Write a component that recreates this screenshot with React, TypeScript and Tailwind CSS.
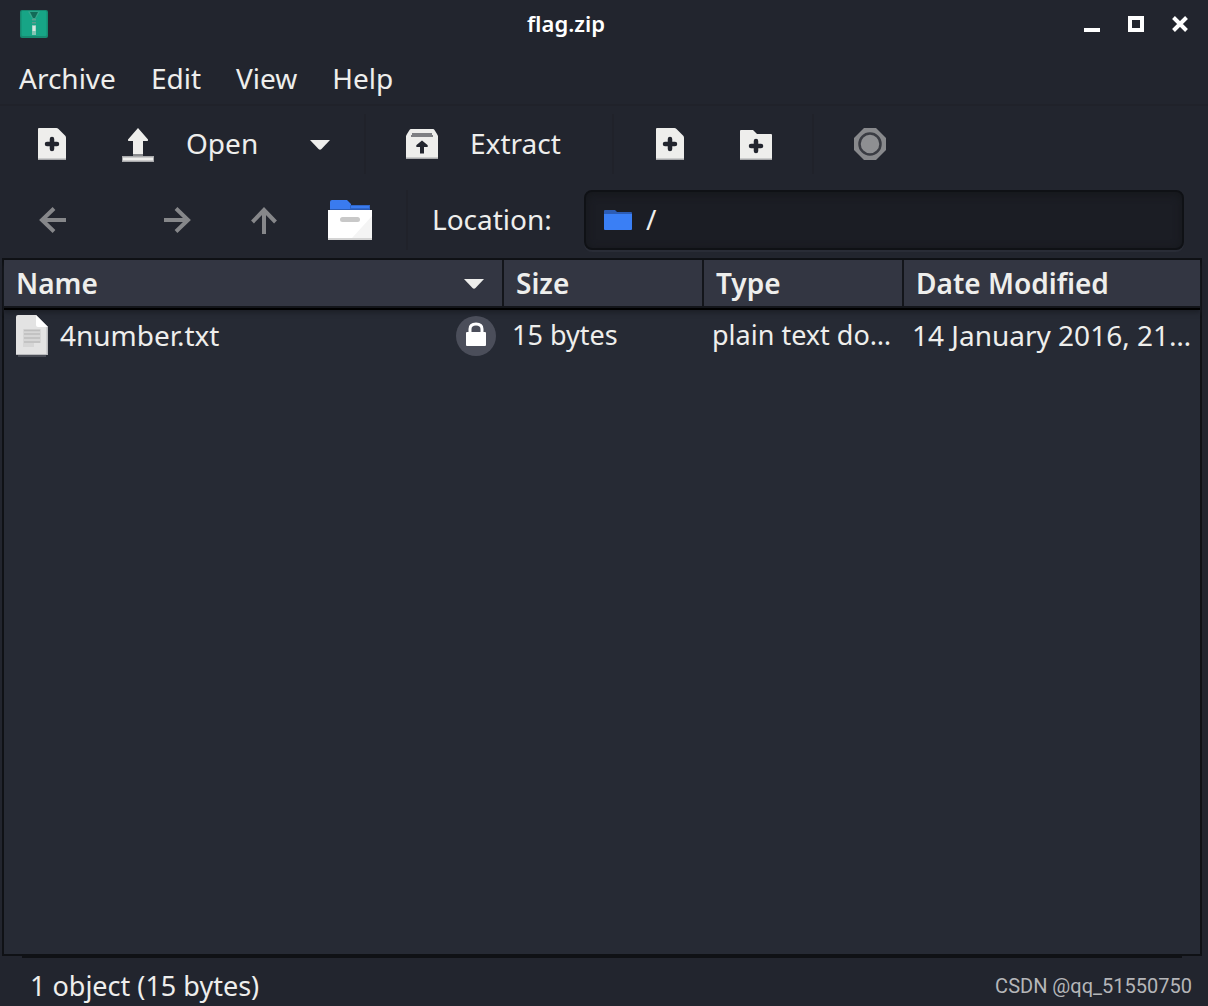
import React from "react";

const ArchiveLogo = () => (
  <svg width="28" height="28" viewBox="0 0 28 28" aria-hidden="true">
    <rect width="28" height="28" rx="2" fill="#168a70" />
    <rect x="1.5" y="1" width="25" height="25" rx="1" fill="#17a586" />
    <path d="M8 1.5h12L15.5 9h-3z" fill="#3aa68e" />
    <path d="M10 2h8l-3 6h-2z" fill="#126b58" />
    <path d="M12 9h4v1.500h-4zM12 12h4v1.500h-4z" fill="#5c9c8e" />
    <rect x="12" y="15" width="4" height="10" fill="#82c6b5" />
    <rect x="12.500" y="16" width="3" height="5" fill="#d6e6e0" />
  </svg>
);

const FilePlus = () => (
  <svg width="32" height="32" viewBox="0 0 32 32" aria-hidden="true">
    <path d="M2 1q0-1 1-1h17.500q1 0 2 1L29 7.500q1 1 1 2V31q0 1-1 1H3q-1 0-1-1z" fill="#eeeeec" />
    <path d="M2 30.500h28V31q0 1-1 1H3q-1 0-1-1z" fill="#a8a9ab" />
    <path d="M16 11v10M11 16h10" stroke="#22252e" strokeWidth="4.500" strokeLinecap="round" />
  </svg>
);

const FolderPlus = () => (
  <svg width="32" height="32" viewBox="0 0 32 32" aria-hidden="true">
    <path d="M0 3q0-1 1-1h12l4 4h14q1 0 1 1v24q0 1-1 1H1q-1 0-1-1z" fill="#eeeeec" />
    <path d="M0 30.500h32V31q0 1-1 1H1q-1 0-1-1z" fill="#a8a9ab" />
    <path d="M16 13v10M11 18h10" stroke="#22252e" strokeWidth="4.500" strokeLinecap="round" />
  </svg>
);

const OpenArrow = () => (
  <svg className="shrink-0" width="32" height="36" viewBox="0 0 32 36" aria-hidden="true">
    <path d="M16 2 26 13.500q.5 1.500-1 1.500h-4v13H11V15H7q-1.500 0-1-1.500z" fill="#eeeeec" />
    <path d="M11 28h10v2H11z" fill="#88898c" />
    <rect y="30" width="32" height="6" fill="#a8a9ab" />
    <rect x="1" y="31.500" width="30" height="3" fill="#eeeeec" />
  </svg>
);

const ExtractBox = () => (
  <svg className="shrink-0" width="32" height="30" viewBox="0 0 32 30" aria-hidden="true">
    <path d="M5 0h22q1 0 1.500 1L31 5l1 2v22q0 1-1 1H1q-1 0-1-1V7l1-2 2.500-4Q4 0 5 0z" fill="#eeeeec" />
    <path d="M0 28.500h32V29q0 1-1 1H1q-1 0-1-1z" fill="#a8a9ab" />
    <path d="M6 4h20v2h1v2H5V6h1z" fill="#7e7f83" />
    <path d="M16 11.500 21.500 16q1 2-1 2H18v6.500h-4V18h-2.500q-2 0-1-2z" fill="#22252e" />
  </svg>
);

const StopIcon = () => (
  <svg width="32" height="32" viewBox="0 0 32 32" aria-hidden="true">
    <path d="M10 0h12l10 10v12L22 32H10L0 22V10z" fill="#88898c" />
    <circle cx="16" cy="16" r="10.500" fill="#8e8f92" stroke="#3a3c43" strokeWidth="2.500" />
  </svg>
);

const Caret = () => (
  <svg width="20" height="12" viewBox="0 0 20 12" aria-hidden="true">
    <path d="M0 2h20L11.500 11q-1.500 1.500-3 0z" fill="#eeeeec" />
  </svg>
);

const Arrow = ({ d }: { d: string }) => (
  <svg width="28" height="28" viewBox="0 0 28 28" fill="none" stroke="#86878a" strokeWidth="4" aria-hidden="true">
    <path d={d} />
  </svg>
);

const HomeFolder = () => (
  <svg width="44" height="40" viewBox="0 0 44 40" aria-hidden="true">
    <path d="M2 2q0-2 2-2h15l4 4v6H2z" fill="#3a7bef" />
    <path d="M22 5h20v5H22z" fill="#2f66c8" />
    <path d="M23 6h18v2H23z" fill="#3a7bef" />
    <path d="M2 9h40v1H2z" fill="#2c5cb4" />
    <path d="M0 10h44v28q0 1-1 1H1q-1 0-1-1z" fill="#fff" />
    <path d="M44 16v22H24z" fill="#f4f4f4" />
    <path d="M0 38h44v2H0z" fill="#d4d4d4" />
    <rect x="12" y="17" width="20" height="5" rx="2.500" fill="#c8c8c8" />
  </svg>
);

const SmallFolder = () => (
  <svg width="28" height="20" viewBox="0 0 28 20" aria-hidden="true">
    <path d="M0 1q0-1 1-1h10l2 2h14q1 0 1 1v4H0z" fill="#2c5cb4" />
    <path d="M0 4h28v15q0 1-1 1H1q-1 0-1-1z" fill="#3a7ff5" />
  </svg>
);

const TextFile = () => (
  <svg className="shrink-0" width="32" height="42" viewBox="0 0 32 42" aria-hidden="true">
    <path d="M2 40h28v2H2z" fill="#4a4d56" />
    <path d="M0 2q0-2 2-2h18l12 12v28H0z" fill="#e3e3e3" />
    <path d="M20 0 32 12H22q-2 0-2-2z" fill="#fff" />
    <path d="M30.500 12H32v28h-1.500zM0 39h32v1H0z" fill="#b9babd" />
    <path d="M7 14h18v14h-7v4H7z" fill="#d6d6d6" />
    <path d="M8 15.500h16M8 19h16M8 23h16M8 27h16" stroke="#bdbdbd" strokeWidth="1.500" />
  </svg>
);

const LockBadge = () => (
  <svg className="shrink-0" width="40" height="40" viewBox="0 0 40 40" role="img" aria-label="Encrypted">
    <circle cx="20" cy="20" r="20" fill="#4b4e5a" />
    <path d="M14 18v-5q0-5 6-5t6 5v5" fill="none" stroke="#fff" strokeWidth="3" />
    <rect x="10" y="16" width="20" height="14" rx="1" fill="#fff" />
  </svg>
);

const Separator = () => <div className="h-[60px] w-0.5 shrink-0 bg-[#20222a]" />;

const iconButton = "flex shrink-0 items-center justify-center";
const headButton = "flex h-[46px] w-full items-center justify-between whitespace-nowrap pl-3 pr-[18px] font-semibold";

export default function App() {
  return (
    <div className="flex min-h-screen flex-col overflow-hidden bg-[#22252e] font-['Noto_Sans',sans-serif] text-[28px] leading-9 text-[#eeeeec]">
      <header className="flex h-12 items-center pl-5 pr-5">
        <ArchiveLogo />
        <h1 className="flex-1 pb-0.5 text-center text-[22px] font-semibold leading-7 text-white">flag.zip</h1>
        <div className="flex items-center gap-7">
          <button aria-label="Minimize" className="flex h-4 w-4 items-end">
            <span className="h-1 w-4 bg-white" />
          </button>
          <button aria-label="Maximize" className="h-4 w-4 border-4 border-white" />
          <button aria-label="Close" className="h-4 w-4">
            <svg width="16" height="16" viewBox="0 0 16 16" aria-hidden="true">
              <path d="m1.500 1.500 13 13m0-13-13 13" stroke="#fff" strokeWidth="4" />
            </svg>
          </button>
        </div>
      </header>

      <nav className="flex h-[58px] items-center gap-[35px] border-b-2 border-[#20222a] pl-[19px] pt-1">
        <button>Archive</button>
        <button>Edit</button>
        <button>View</button>
        <button>Help</button>
      </nav>

      <div className="flex h-[76px] items-center pl-9">
        <button aria-label="New archive" className={iconButton}><FilePlus /></button>
        <button className="ml-[54px] flex w-36 items-center gap-8"><OpenArrow /><span className="pb-0.5">Open</span></button>
        <button aria-label="Recent archives" className="ml-11 flex"><Caret /></button>
        <div className="ml-[34px]"><Separator /></div>
        <button className="ml-10 flex w-40 items-center gap-8"><ExtractBox /><span className="pb-0.5">Extract</span></button>
        <div className="ml-[46px]"><Separator /></div>
        <button aria-label="Add files" className={`ml-10 ${iconButton}`}><FilePlus /></button>
        <button aria-label="Add a folder" className={`ml-[54px] ${iconButton}`}><FolderPlus /></button>
        <div className="ml-10"><Separator /></div>
        <button aria-label="Stop" className={`ml-10 ${iconButton}`}><StopIcon /></button>
      </div>

      <div className="flex h-[76px] items-center pl-[38px] pr-6">
        <button aria-label="Back" className={iconButton}><Arrow d="M28 14H4M16 2.500 4 14l12 11.500" /></button>
        <button aria-label="Forward" className={`ml-[98px] ${iconButton}`}><Arrow d="M0 14h24M12 2.500 24 14 12 25.500" /></button>
        <button aria-label="Up" className={`ml-[58px] ${iconButton}`}><Arrow d="M14 28V4M2.500 16 14 4l11.500 12" /></button>
        <button aria-label="Home" className={`ml-[50px] ${iconButton}`}><HomeFolder /></button>
        <div className="ml-[34px] mr-6"><Separator /></div>
        <label htmlFor="location" className="w-[152px] shrink-0 pb-0.5">Location:</label>
        <div className="relative flex flex-1 items-center">
          <span className="pointer-events-none absolute left-5"><SmallFolder /></span>
          <input
            id="location"
            defaultValue="/"
            className="h-[60px] w-full rounded-lg border-2 border-[#0f1115] bg-[#1b1d24] pb-0.5 pl-15 pr-4 shadow-[0_2px_0_#292c36,inset_0_2px_8px_#15171b] outline-none"
          />
        </div>
      </div>

      <main className="ml-0.5 mr-1.5 flex-1 border-2 border-[#0f1115] bg-[#262a34]">
        <table className="w-full table-fixed border-separate border-spacing-0 text-left">
          <colgroup>
            <col className="w-[500px]" />
            <col className="w-[200px]" />
            <col className="w-[200px]" />
            <col />
          </colgroup>
          <thead>
            <tr className="bg-[#333642] shadow-[0_2px_0_#000,0_5px_4px_#1d2028]">
              <th className="border-b-2 border-r-2 border-[#13151a] p-0"><button className={headButton}>Name<Caret /></button></th>
              <th className="border-b-2 border-r-2 border-[#13151a] p-0"><button className={headButton}>Size</button></th>
              <th className="border-b-2 border-r-2 border-[#13151a] p-0"><button className={headButton}>Type</button></th>
              <th className="border-b-2 border-[#13151a] p-0"><button className={headButton}>Date Modified</button></th>
            </tr>
          </thead>
          <tbody>
            <tr className="h-14">
              <td className="p-0">
                <div className="flex items-center pl-3 pr-2">
                  <TextFile />
                  <span className="ml-3 flex-1 pb-0.5">4number.txt</span>
                  <LockBadge />
                </div>
              </td>
              <td className="whitespace-nowrap p-0 pb-0.5 pl-2 text-[27px]">15 bytes</td>
              <td className="whitespace-nowrap p-0 pb-0.5 pl-2 text-[27px]">plain text do…</td>
              <td className="whitespace-nowrap p-0 pb-0.5 pl-2 text-[28px]">14 January 2016, 21…</td>
            </tr>
          </tbody>
        </table>
      </main>

      <footer className="ml-[22px] mr-[26px] flex h-[50px] items-center justify-between border-t-2 border-[#0f1115] pl-2 pt-2">
        <span className="text-[27px]">1 object (15 bytes)</span>
        <span className="-mr-2.5 font-['Roboto',sans-serif] text-[20px] leading-7 text-[#b5b6b9]">CSDN @qq_51550750</span>
      </footer>
    </div>
  );
}
